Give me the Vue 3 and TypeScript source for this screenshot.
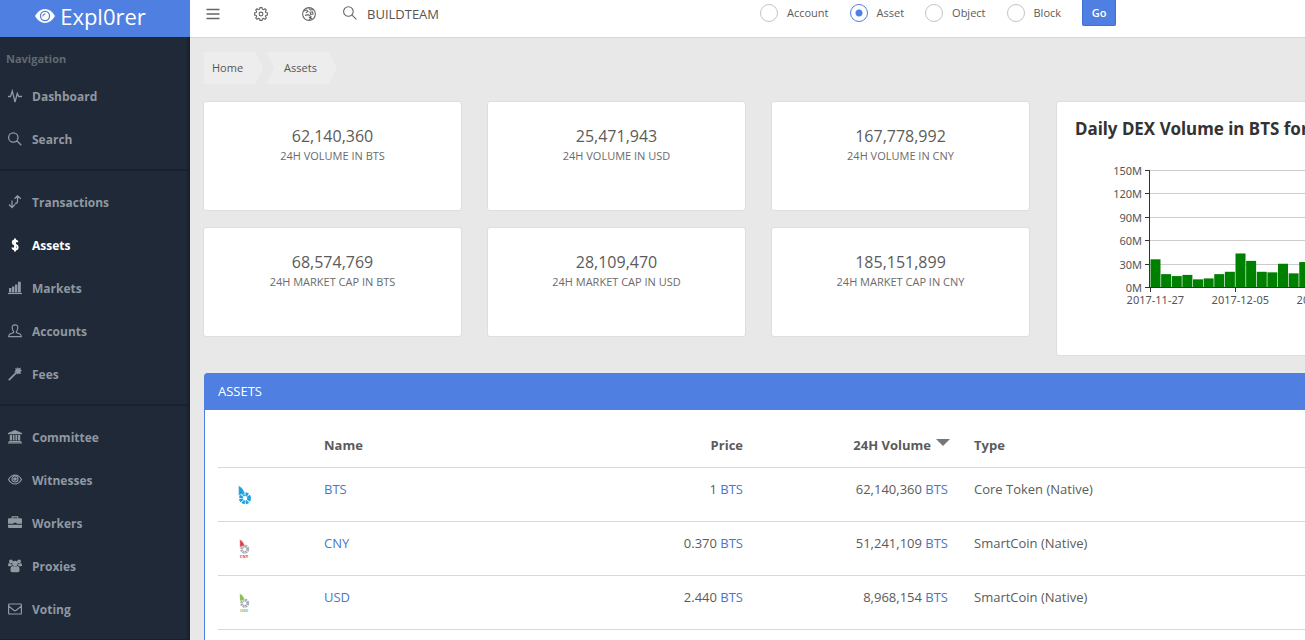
<script setup lang="ts">
import { ref } from 'vue'

interface Shape { d: string; fill?: boolean; w?: number }
interface NavItem { label: string; icon: Shape[]; active?: boolean }

const navGroups: NavItem[][] = [
  [
    { label: 'Dashboard', icon: [{ d: 'M0 7.5H2.5L4.3 2L7 13L9.3 4.5L10.7 7.5H14', w: 1.3 }] },
    { label: 'Search', icon: [{ d: 'M10 5.5A4.7 4.7 0 1 1 .6 5.5A4.7 4.7 0 1 1 10 5.5M8.8 8.8L13.3 13.2', w: 1.3 }] },
  ],
  [
    { label: 'Transactions', icon: [{ d: 'M1 9.5L4 12.5L7 9.5M4 12V5.5M6.5 3.8L9.5 .8L12.8 3.8M9.5 1.2V6.2Q9.5 8.5 7 8.5', w: 1.3 }] },
    { label: 'Assets', active: true, icon: [{ d: 'M9.5 4.2Q9 2.5 7 2.5Q4.8 2.5 4.8 4.4Q4.8 6 7 6.6Q9.6 7.2 9.6 9.2Q9.6 11.4 7 11.4Q4.8 11.4 4.3 9.6M7 .4V13.6', w: 2 }] },
    { label: 'Markets', icon: [{ d: 'M0 12.5H14', w: 1.2 }, { d: 'M1 7H3.4V11.4H1zM4 5.4H6.4V11.4H4zM7 3.6H9.4V11.4H7zM10 .8H12.8V11.4H10z', fill: true }] },
    { label: 'Accounts', icon: [{ d: 'M7 .8C4.9 .8 4 2.2 4.2 4C4.4 6 5.2 7 5.6 7.5V8.6L2 10Q.8 10.6 .7 12.6H13.3Q13.2 10.6 12 10L8.4 8.6V7.5C8.8 7 9.6 6 9.8 4C10 2.2 9.1 .8 7 .8z', w: 1.2 }] },
    { label: 'Fees', icon: [{ d: 'M.8 13.2L8.8 5.2', w: 1.8 }, { d: 'M9.5 0L10.6 1.4L12.8 .4L12.4 2.6L14 3.6L12.4 4.8L13 7L10.8 6.4L9.3 7.6L8.6 5.6L6.4 4.8L7.8 3L7 1.2L9.2 1.6z', fill: true }] },
  ],
  [
    { label: 'Committee', icon: [{ d: 'M7 0L14 3V4.2H0V3zM1.8 5H4V10.5H1.8zM4.8 5H6.5V10.5H4.8zM7.4 5H9.2V10.5H7.4zM10 5H12.2V10.5H10zM.8 11H13.2V12H.8zM0 12.3H14V13.4H0z', fill: true }] },
    { label: 'Witnesses', icon: [{ d: 'M.5 6.5Q3 2 7 2Q11 2 13.5 6.5Q11 11 7 11Q3 11 .5 6.5zM10 6A3 3 0 1 1 4 6A3 3 0 1 1 10 6', w: 1.2 }, { d: 'M8.8 6A1.8 1.8 0 1 1 5.2 6A1.8 1.8 0 1 1 8.8 6', fill: true }] },
    { label: 'Workers', icon: [{ d: 'M4.2 2.5V.8H9.8V2.5', w: 1.2 }, { d: 'M1 2.2H13Q14 2.2 14 3.2V7.8H8.5V6.8H5.5V7.8H0V3.2Q0 2.2 1 2.2zM0 8.8H14V11.2Q14 12 13 12H1Q0 12 0 11.2z', fill: true }] },
    { label: 'Proxies', icon: [{ d: 'M4.8 2.3A1.9 1.9 0 1 1 1 2.3A1.9 1.9 0 1 1 4.8 2.3M13 2.3A1.9 1.9 0 1 1 9.2 2.3A1.9 1.9 0 1 1 13 2.3M9.8 4.6A2.8 2.8 0 1 1 4.2 4.6A2.8 2.8 0 1 1 9.8 4.6M1 4Q0 4.2 0 6.2Q0 7.2 1 7.2H3.2Q4.2 7 3.6 4.8Q2.4 4.8 1 4zM13 4Q14 4.2 14 6.2Q14 7.2 13 7.2H10.8Q9.8 7 10.4 4.8Q11.6 4.8 13 4zM4.4 7Q7 8.6 9.6 7Q11.6 7.6 11.6 11Q11.6 13.2 10 13.2H4Q2.4 13.2 2.4 11Q2.4 7.6 4.4 7z', fill: true }] },
    { label: 'Voting', icon: [{ d: 'M1.2 2H12.8Q13.4 2 13.4 2.6V11.4Q13.4 12 12.8 12H1.2Q.6 12 .6 11.4V2.6Q.6 2 1.2 2zM.8 4.2L5.8 8.2Q7 9 8.2 8.2L13.2 4.2', w: 1.2 }] },
  ],
]

const searchKinds = ['Account', 'Asset', 'Object', 'Block']
const kind = ref('Asset')
const query = ref('BUILDTEAM')

const stats = [
  { value: '62,140,360', label: '24H VOLUME IN BTS' },
  { value: '25,471,943', label: '24H VOLUME IN USD' },
  { value: '167,778,992', label: '24H VOLUME IN CNY' },
  { value: '68,574,769', label: '24H MARKET CAP IN BTS' },
  { value: '28,109,470', label: '24H MARKET CAP IN USD' },
  { value: '185,151,899', label: '24H MARKET CAP IN CNY' },
]

// Chart geometry: 150M spans plotHeight pixels above the base line
const plotLeft = 93
const plotTop = 12
const plotHeight = 117
const base = plotTop + plotHeight
const step = 85 / 8
const volumes = [35.5, 16.5, 14, 15.5, 9.8, 11, 16.5, 19.5, 43, 33.5, 19.5, 18.8, 29.8, 17.5, 32]
const ticks = [150, 120, 90, 60, 30, 0].map(v => ({ v, y: Math.round(base - (v / 150) * plotHeight) + 0.5 }))
const bars = volumes.map((v, i) => ({
  x: plotLeft + i * step + 0.5,
  y: base - (v / 150) * plotHeight,
  h: (v / 150) * plotHeight,
}))
const dates = ['2017-11-27', '2017-12-05', '2017-12-13'].map((text, i) => ({
  text,
  tick: Math.round(plotLeft + i * 8 * step) + 0.5,
  x: plotLeft + (i * 8 + 0.5) * step,
}))

const assets = [
  { name: 'BTS', price: '1', volume: '62,140,360', type: 'Core Token (Native)', leaf: '#1c9fe0', ring: '#1c9fe0', tag: false },
  { name: 'CNY', price: '0.370', volume: '51,241,109', type: 'SmartCoin (Native)', leaf: '#d2454c', ring: '#a9abb4', tag: true },
  { name: 'USD', price: '2.440', volume: '8,968,154', type: 'SmartCoin (Native)', leaf: '#86bd4c', ring: '#a9abb4', tag: true },
]
</script>

<template>
  <div class="app">
    <aside class="sidebar">
      <a class="brand" href="#">
        <svg width="20" height="16" viewBox="0 0 20 16" aria-hidden="true">
          <path d="M0 8Q4 1 10 1Q16 1 20 8Q16 15 10 15Q4 15 0 8z" fill="#fff" />
          <circle cx="10" cy="8" r="5.2" fill="#4f7fe1" />
          <circle cx="10" cy="8" r="3.9" fill="#fff" />
          <path d="M8 8.4A2 2 0 0 1 10.4 6" fill="none" stroke="#4f7fe1" stroke-width="1.1" />
        </svg>
        <span>Expl0rer</span>
      </a>
      <nav>
        <p class="nav-title">Navigation</p>
        <ul v-for="(group, g) in navGroups" :key="g">
          <li v-for="item in group" :key="item.label">
            <a href="#" :class="{ active: item.active }">
              <svg width="14" height="14" viewBox="0 0 14 14" aria-hidden="true">
                <path
                  v-for="(s, i) in item.icon" :key="i" :d="s.d"
                  :fill="s.fill ? 'currentColor' : 'none'"
                  :stroke="s.fill ? 'none' : 'currentColor'" :stroke-width="s.w"
                />
              </svg>
              <span>{{ item.label }}</span>
            </a>
          </li>
        </ul>
      </nav>
    </aside>

    <div class="main">
      <header class="topbar">
        <button class="tool" type="button" aria-label="Toggle menu">
          <svg width="14" height="14" viewBox="0 0 14 14"><path d="M.5 2.5H13.5M.5 7H13.5M.5 11.5H13.5" stroke-width="1.6" /></svg>
        </button>
        <button class="tool" type="button" aria-label="Settings">
          <svg width="14" height="14" viewBox="0 0 14 14">
            <path d="M6 .6H8L8.4 2.2L9.5 2.7L11 1.7L12.3 3L11.4 4.5L11.8 5.6L13.4 6V8L11.8 8.4L11.4 9.5L12.3 11L11 12.3L9.5 11.4L8.4 11.8L8 13.4H6L5.6 11.8L4.5 11.4L3 12.3L1.7 11L2.7 9.5L2.2 8.4L.6 8V6L2.2 5.6L2.7 4.5L1.7 3L3 1.7L4.5 2.7L5.6 2.2z" />
            <circle cx="7" cy="7" r="1.9" />
          </svg>
        </button>
        <button class="tool" type="button" aria-label="Language">
          <svg width="14" height="14" viewBox="0 0 14 14">
            <circle cx="7" cy="7" r="6.4" />
            <path d="M1.8 4L4.6 2.8L6 4.4L3.8 5.8M7 1.2L8.2 3L11 2.6M8 5.2L10.6 4.8L11 7L8.8 7.4zM3 8.4L6.4 7.6L9 9.6L7.4 13M6.8 10L10.4 12" />
          </svg>
        </button>
        <form class="search" @submit.prevent>
          <label class="query">
            <svg width="14" height="14" viewBox="0 0 14 14" aria-hidden="true"><path d="M10.2 5.5A4.8 4.8 0 1 1 .6 5.5A4.8 4.8 0 1 1 10.2 5.5M8.8 8.9L13.4 13.4" /></svg>
            <input v-model="query" type="text" aria-label="Search">
          </label>
          <label v-for="k in searchKinds" :key="k" class="kind">
            <input v-model="kind" type="radio" name="kind" :value="k">{{ k }}
          </label>
          <button class="go" type="submit">Go</button>
        </form>
      </header>

      <main class="content">
        <nav class="crumbs" aria-label="Breadcrumb">
          <a href="#">Home</a>
          <a href="#">Assets</a>
        </nav>

        <div class="overview">
          <div class="stats">
            <section v-for="s in stats" :key="s.label" class="card">
              <strong>{{ s.value }}</strong>
              <span>{{ s.label }}</span>
            </section>
          </div>
          <section class="chart">
            <h2>Daily DEX Volume in BTS for the last 30 days</h2>
            <svg class="plot" width="100%" height="160" role="img" aria-label="Daily volume">
              <line v-for="t in ticks" :key="t.v" :x1="plotLeft" x2="100%" :y1="t.y" :y2="t.y" stroke="#ccc" />
              <rect v-for="(b, i) in bars" :key="i" :x="b.x" :y="b.y" width="10" :height="b.h" fill="#008000" />
              <g stroke="#333">
                <line :x1="plotLeft" x2="100%" :y1="base + 0.5" :y2="base + 0.5" />
                <line :x1="plotLeft - 0.5" :x2="plotLeft - 0.5" :y1="plotTop" :y2="base + 1" />
                <line v-for="t in ticks" :key="t.v" :x1="plotLeft - 5" :x2="plotLeft" :y1="t.y" :y2="t.y" />
                <line v-for="d in dates" :key="d.text" :x1="d.tick" :x2="d.tick" :y1="base" :y2="base + 5" />
              </g>
              <text v-for="t in ticks" :key="t.v" :x="plotLeft - 8" :y="t.y + 4" text-anchor="end">{{ t.v }}M</text>
              <text v-for="d in dates" :key="d.text" :x="d.x" :y="base + 17" text-anchor="middle">{{ d.text }}</text>
            </svg>
          </section>
        </div>

        <section class="panel">
          <h2>ASSETS</h2>
          <div class="panel-body">
            <table>
              <colgroup>
                <col class="c-icon"><col class="c-name"><col class="c-price"><col class="c-volume"><col>
              </colgroup>
              <thead>
                <tr>
                  <th aria-label="Logo" />
                  <th>Name</th>
                  <th class="num">Price</th>
                  <th class="num">24H Volume<i class="caret" /></th>
                  <th>Type</th>
                </tr>
              </thead>
              <tbody>
                <tr v-for="a in assets" :key="a.name">
                  <td class="logo">
                    <svg width="30" height="30" viewBox="0 0 30 30" aria-hidden="true">
                      <g :transform="a.tag ? 'translate(3.3 1.3) scale(.76)' : undefined">
                        <circle cx="15" cy="18.3" r="4.1" fill="none" :stroke="a.ring" stroke-width="3.8" stroke-dasharray="2.42 0.8" />
                        <path d="M8.5 5.5Q14.4 8.8 14.8 14.6L12.4 14Q10 14.6 8.7 16z" :fill="a.leaf" stroke="#fff" stroke-width=".4" />
                      </g>
                      <text v-if="a.tag" class="tag" x="14" y="24" text-anchor="middle" :fill="a.leaf">{{ a.name }}</text>
                    </svg>
                  </td>
                  <td><a href="#">{{ a.name }}</a></td>
                  <td class="num">{{ a.price }} <a href="#">BTS</a></td>
                  <td class="num volume">{{ a.volume }} <a href="#">BTS</a></td>
                  <td>{{ a.type }}</td>
                </tr>
              </tbody>
            </table>
          </div>
        </section>
      </main>
    </div>
  </div>
</template>

<style>
html { background: #e8e8e8; }
body { margin: 0; overflow-x: hidden; }
</style>

<style scoped>
* { box-sizing: border-box; }
.app {
  display: flex;
  height: 100vh;
  overflow: hidden;
  font: 13px/20px "Open Sans", "Noto Sans", sans-serif;
  color: #5b5b5b;
}
a { color: #4a77cc; text-decoration: none; }
h2 { margin: 0; }
button { padding: 0; border: 0; background: none; font: inherit; cursor: pointer; }

.sidebar {
  flex: 0 0 190px;
  background: #1f2937;
  box-shadow: inset -3px 0 2px -1px #18212a;
}
.brand {
  display: flex;
  align-items: center;
  justify-content: center;
  gap: 5px;
  height: 37px;
  padding: 0 9px 5px 0;
  background: #4f7fe1;
  color: #fff;
  font-size: 22px;
  line-height: 32px;
}
.nav-title {
  margin: 0;
  padding: 12px 6px 6px;
  color: #626a74;
  font-size: 11px;
  font-weight: 700;
}
.sidebar ul { margin: 0; padding: 0 0 8px; list-style: none; }
.sidebar ul + ul { padding-top: 10px; border-top: 2px solid #18212f; }
.sidebar ul:last-child { border-bottom: 2px solid #18212f; }
.sidebar li a {
  display: flex;
  align-items: center;
  gap: 10px;
  height: 43px;
  padding: 0 8px;
  color: #9098a1;
  font-size: 12px;
  font-weight: 700;
}
.sidebar li svg { margin-bottom: 2px; }
.sidebar li a.active { color: #fff; }

.main { flex: 1; min-width: 0; overflow: hidden; }
.topbar {
  display: flex;
  height: 38px;
  border-bottom: 1px solid #d8d8d8;
  background: #fff;
  padding-left: 16px;
}
.topbar svg { display: block; fill: none; stroke: #666; stroke-width: 1.1; }
.tool { width: 14px; height: 28px; margin-right: 34px; }
.search { display: flex; align-items: flex-start; margin-left: -7px; font-size: 11px; }
.query { display: flex; align-items: center; gap: 10px; height: 28px; margin-right: 23px; }
.query svg { margin-bottom: 2px; }
.query input {
  width: 370px;
  padding: 0;
  border: 0;
  outline: 0;
  background: none;
  color: #555;
  font: 13px/20px "Open Sans", "Noto Sans", sans-serif;
}
.kind { display: flex; align-items: center; gap: 9px; height: 26px; margin-right: 21px; }
.kind input {
  appearance: none;
  width: 18px;
  height: 18px;
  margin: 0;
  border: 1px solid #c4c4c4;
  border-radius: 50%;
  background: #fff;
}
.kind input:checked {
  border-color: #4f7fe1;
  background: radial-gradient(circle, #4f7fe1 3px, #fff 4px);
}
.go {
  width: 34px;
  height: 26px;
  border: 1px solid #3f70d6;
  border-top: 0;
  border-radius: 0 0 2px 2px;
  background: #4f7fe1;
  color: #fff;
  font-weight: 600;
}

/* Wide dashboard canvas; narrower windows show its left part */
.content { min-width: 1706px; padding: 14px 13px 0; }
.crumbs { display: flex; gap: 3px; padding-left: 1px; font-size: 11px; line-height: 32px; }
.crumbs a {
  padding: 0 20px 0 18px;
  background: #ededed;
  color: #555;
  clip-path: polygon(0 0, calc(100% - 8px) 0, 100% 50%, calc(100% - 8px) 100%, 0 100%, 8px 50%);
}
.crumbs a:first-child {
  padding-left: 8px;
  clip-path: polygon(0 0, calc(100% - 8px) 0, 100% 50%, calc(100% - 8px) 100%, 0 100%);
}
.overview {
  display: grid;
  grid-template-columns: 1fr 1fr;
  align-items: start;
  gap: 26px;
  margin: 17px 0;
}
.stats { display: grid; grid-template-columns: repeat(3, 1fr); gap: 16px 25px; }
.card, .chart {
  border: 1px solid #dedede;
  border-radius: 3px;
  background: #fff;
}
.card {
  display: flex;
  flex-direction: column;
  align-items: center;
  height: 110px;
  padding-top: 24px;
}
.card strong { font-size: 16px; font-weight: 400; }
.card span { font-size: 11px; color: #6b6b6b; }
.chart { height: 255px; padding-top: 15px; overflow: hidden; }
.chart h2 {
  padding: 0 18px;
  color: #333;
  font: bold 17px/24px "Noto Sans", "Open Sans", sans-serif;
  white-space: nowrap;
}
.plot { display: block; margin-top: 17px; }
.plot text { fill: #555; font: 11px "Noto Sans", "Open Sans", sans-serif; }

.panel { border: 1px solid #4f7fe1; border-radius: 3px 3px 0 0; background: #fff; margin-left: 1px; }
.panel h2 {
  padding: 7px 13px 9px;
  background: #4f7fe1;
  color: #fff;
  font-size: 13px;
  font-weight: 400;
  line-height: 20px;
}
.panel-body { padding: 13px; }
table { width: 100%; table-layout: fixed; border-spacing: 0; }
.c-icon { width: 94px; }
.c-name { width: 200px; }
.c-price { width: 243px; }
.c-volume { width: 207px; }
th, td {
  padding: 12px;
  border-bottom: 1px solid #d9d9d9;
  text-align: left;
  vertical-align: top;
}
th { font-weight: 700; }
td { padding-top: 11px; }
.num { text-align: right; }
.volume { padding-right: 14px; }
td.logo { padding: 12px 12px 11px; }
.logo svg { display: block; }
.tag { font: bold 4px "Open Sans", sans-serif; }
.caret {
  display: inline-block;
  margin-left: 5px;
  border: 7px solid transparent;
  border-top-color: #777;
  border-bottom: 0;
  vertical-align: 4px;
}
</style>
